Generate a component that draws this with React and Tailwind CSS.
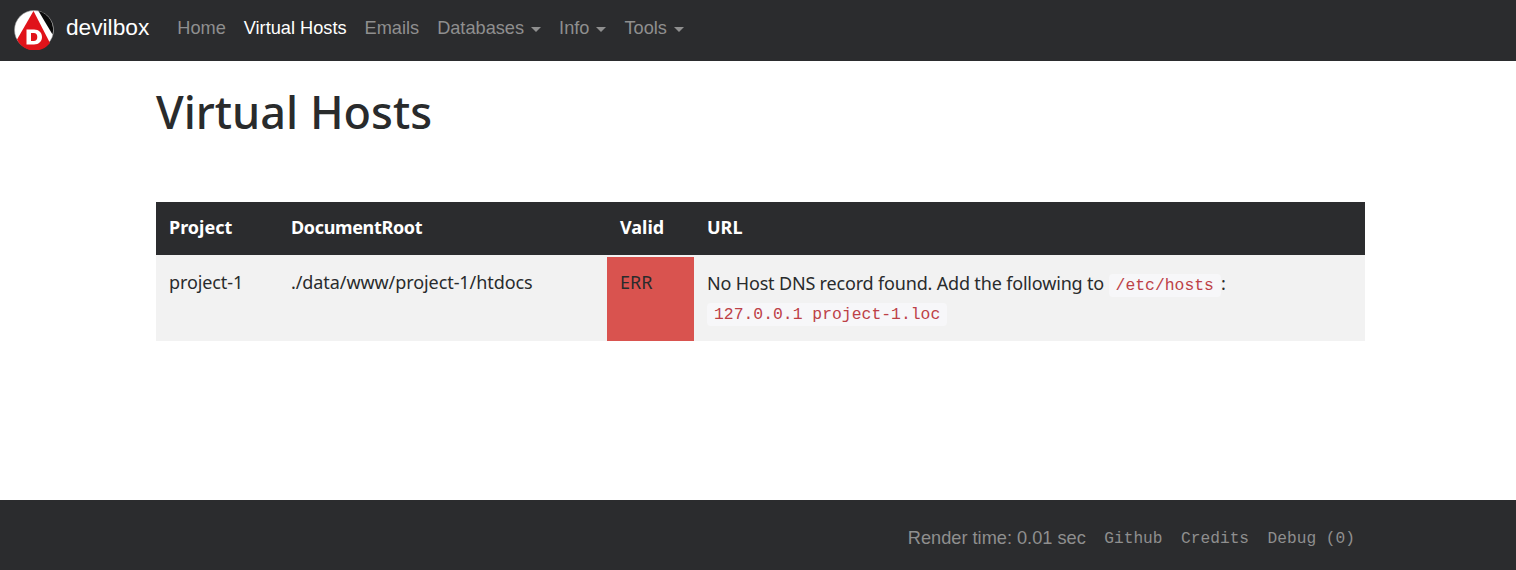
export default function App() {
  const caret = <i className="w-0 h-0 border-x-[5.4px] border-x-transparent border-t-[5.4px] border-t-[#8f8f8f] mt-[2px]" />;
  const code = "font-['Liberation_Mono',monospace] text-[16.4px] leading-none tracking-normal text-[#bd4147] bg-[#f7f7f9] rounded-[4px] px-[7px] py-[2px]";
  return (
    <div className="min-h-screen flex flex-col bg-white text-[#292b2c] font-['Noto_Sans',sans-serif]">
      <nav className="h-[61px] bg-[#2b2c2e] flex items-center pl-[14px] font-['Liberation_Sans',sans-serif]">
        <svg width="40" height="40" viewBox="0 0 40 40" className="shrink-0 relative -top-[1px]">
          <circle cx="20" cy="20" r="19.5" fill="#fff" stroke="#9a9a9a" strokeWidth="0.6" />
          <path d="M24.5 1 A19.3 19.3 0 0 1 38.5 24.5 Z" fill="#0a0a0a" />
          <path d="M19.5 1 L36 33 A19.5 19.5 0 0 1 3 29.5 Z" fill="#e0131a" />
          <path fillRule="evenodd" fill="#fff" d="M12.5 19.5 h7.5 c5 0 8 3.2 8 7.5 s-3 7.5 -8 7.5 h-7.5 z M17 23 v8 h2.8 c2.2 0 3.5-1.6 3.5-4 s-1.3-4-3.5-4 z" />
        </svg>
        <span className="ml-3 text-[22.7px] leading-none text-white relative -top-[3px]">devilbox</span>
        <div className="ml-[28px] flex gap-[18px] text-[18.2px] text-[#8f8f8f] relative -top-[2px]">
          <span>Home</span>
          <span className="text-white">Virtual Hosts</span>
          <span>Emails</span>
          <span className="flex items-center gap-[7px]">Databases{caret}</span>
          <span className="flex items-center gap-[7px]">Info{caret}</span>
          <span className="flex items-center gap-[7px]">Tools{caret}</span>
        </div>
      </nav>
      <main className="flex-1 pl-[156px] pr-[151px]">
        <h1 className="mt-[24px] text-[45px] leading-[54px] font-medium">Virtual Hosts</h1>
        <table className="mt-[63px] w-full table-fixed border-separate border-spacing-0 text-[18px] leading-[27px]">
          <colgroup>
            <col className="w-[122px]" />
            <col className="w-[329px]" />
            <col className="w-[87px]" />
            <col />
          </colgroup>
          <thead>
            <tr className="bg-[#2b2c2e] text-white text-left h-[53px]">
              <th className="px-[13px] pb-[3px] font-bold">Project</th>
              <th className="px-[13px] pb-[3px] font-bold tracking-[-0.35px]">DocumentRoot</th>
              <th className="px-[13px] pb-[3px] font-bold">Valid</th>
              <th className="px-[13px] pb-[3px] font-bold">URL</th>
            </tr>
          </thead>
          <tbody>
            <tr className="h-[86px] align-top">
              <td className="bg-[#f2f2f2] px-[13px] pt-[14px] tracking-[-0.1px]">project-1</td>
              <td className="bg-[#f2f2f2] px-[13px] pt-[14px] tracking-[-0.08px]">./data/www/project-1/htdocs</td>
              <td className="border-t-2 border-[#f2f2f2] px-[13px] pt-[12px] bg-[#d9534f]">ERR</td>
              <td className="bg-[#f2f2f2] px-[13px] pt-[14px] leading-[29px] tracking-[-0.17px]">
                No Host DNS record found. Add the following to{" "}
                <code className={code}>/etc/hosts</code>:
                <br />
                <code className={code}>127.0.0.1 project-1.loc</code>
              </td>
            </tr>
          </tbody>
        </table>
      </main>
      <footer className="h-[70px] bg-[#2b2c2e] flex items-center justify-end pr-[161px] pt-[7px] text-[#8f8f8f]">
        <span className="font-['Liberation_Sans',sans-serif] text-[18.2px]">Render time: 0.01 sec</span>
        <span className="ml-[18.5px] font-['Liberation_Mono',monospace] text-[16.2px] relative top-[1px]">Github</span>
        <span className="ml-[18.5px] font-['Liberation_Mono',monospace] text-[16.2px] relative top-[1px]">Credits</span>
        <span className="ml-[18.5px] font-['Liberation_Mono',monospace] text-[16.2px] relative top-[1px]">Debug (0)</span>
      </footer>
    </div>
  );
}
